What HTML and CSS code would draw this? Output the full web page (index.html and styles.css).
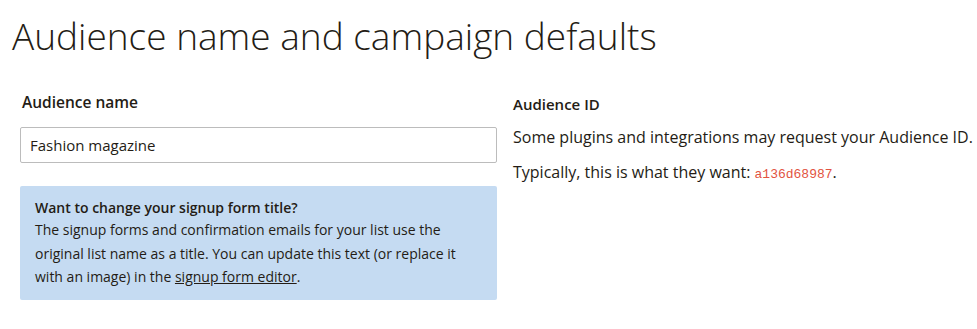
FILE: index.html
```html
<!DOCTYPE html>
<html lang="en">
<head>
<meta charset="utf-8">
<title>Audience name and campaign defaults</title>
<link rel="stylesheet" href="styles.css">
</head>
<body>
<div class="page">
  <h1 class="title">Audience name and campaign defaults</h1>
  <div class="columns">
    <div class="col-left">
      <label class="field-label" for="aud-name">Audience name</label>
      <input class="text-input" id="aud-name" type="text" value="Fashion magazine">
      <div class="info-box">
        <p class="info-head">Want to change your signup form title?</p>
        <p class="info-body">
          <span class="info-line">The signup forms and confirmation emails for your list use the</span>
          <span class="info-line">original list name as a title. You can update this text (or replace it</span>
          <span class="info-line">with an image) in the <a href="#" class="info-link">signup form editor</a>.</span>
        </p>
      </div>
    </div>
    <div class="col-right">
      <h2 class="side-label">Audience ID</h2>
      <p class="side-text">Some plugins and integrations may request your Audience ID.</p>
      <p class="side-text">Typically, this is what they want: <code class="aud-id">a136d68987</code>.</p>
    </div>
  </div>
</div>
</body>
</html>
```
FILE: styles.css
```css
html, body {
  margin: 0;
  padding: 0;
  background: #ffffff;
}
body {
  font-family: "Open Sans", "Liberation Sans", sans-serif;
  color: #241c15;
}
.title {
  margin: 0;
  padding: 12px 0 0 12px;
  font-size: 37px;
  font-weight: 300;
  line-height: 48px;
}
.columns {
  display: flex;
  gap: 16px;
  padding: 32px 0 0 20px;
}
.col-left {
  flex: 0 0 477px;
  width: 477px;
}
.col-right {
  flex: 1 1 auto;
}
.field-label {
  display: block;
  margin: 0 0 15px 2px;
  font-size: 15.5px;
  font-weight: 600;
  line-height: 20px;
}
.text-input {
  display: block;
  box-sizing: border-box;
  width: 477px;
  height: 36px;
  margin: 0;
  padding: 0 9px;
  border: 1px solid #bcbcbc;
  border-radius: 2px;
  font-family: inherit;
  font-size: 15px;
  color: #241c15;
  background: #fff;
}
.info-box {
  margin-top: 23px;
  box-sizing: border-box;
  height: 114px;
  padding: 12px 15px;
  background: #c5dbf2;
  border-radius: 2px;
}
.info-head {
  margin: 0;
  font-size: 14px;
  font-weight: 600;
  line-height: 20px;
}
.info-body {
  margin: 0;
  font-size: 14px;
  line-height: 23.5px;
}
.info-line {
  display: block;
}
.info-link {
  color: #241c15;
  text-decoration: underline;
}
.side-label {
  margin: 2px 0 0 0;
  font-size: 15px;
  font-weight: 600;
  line-height: 20px;
}
.side-text {
  margin: 12px 0 0 0;
  font-size: 16px;
  line-height: 22px;
}
.side-text + .side-text {
  margin-top: 13px;
}
.aud-id {
  font-family: "Liberation Mono", monospace;
  font-size: 13px;
  color: #e2533f;
}
```
